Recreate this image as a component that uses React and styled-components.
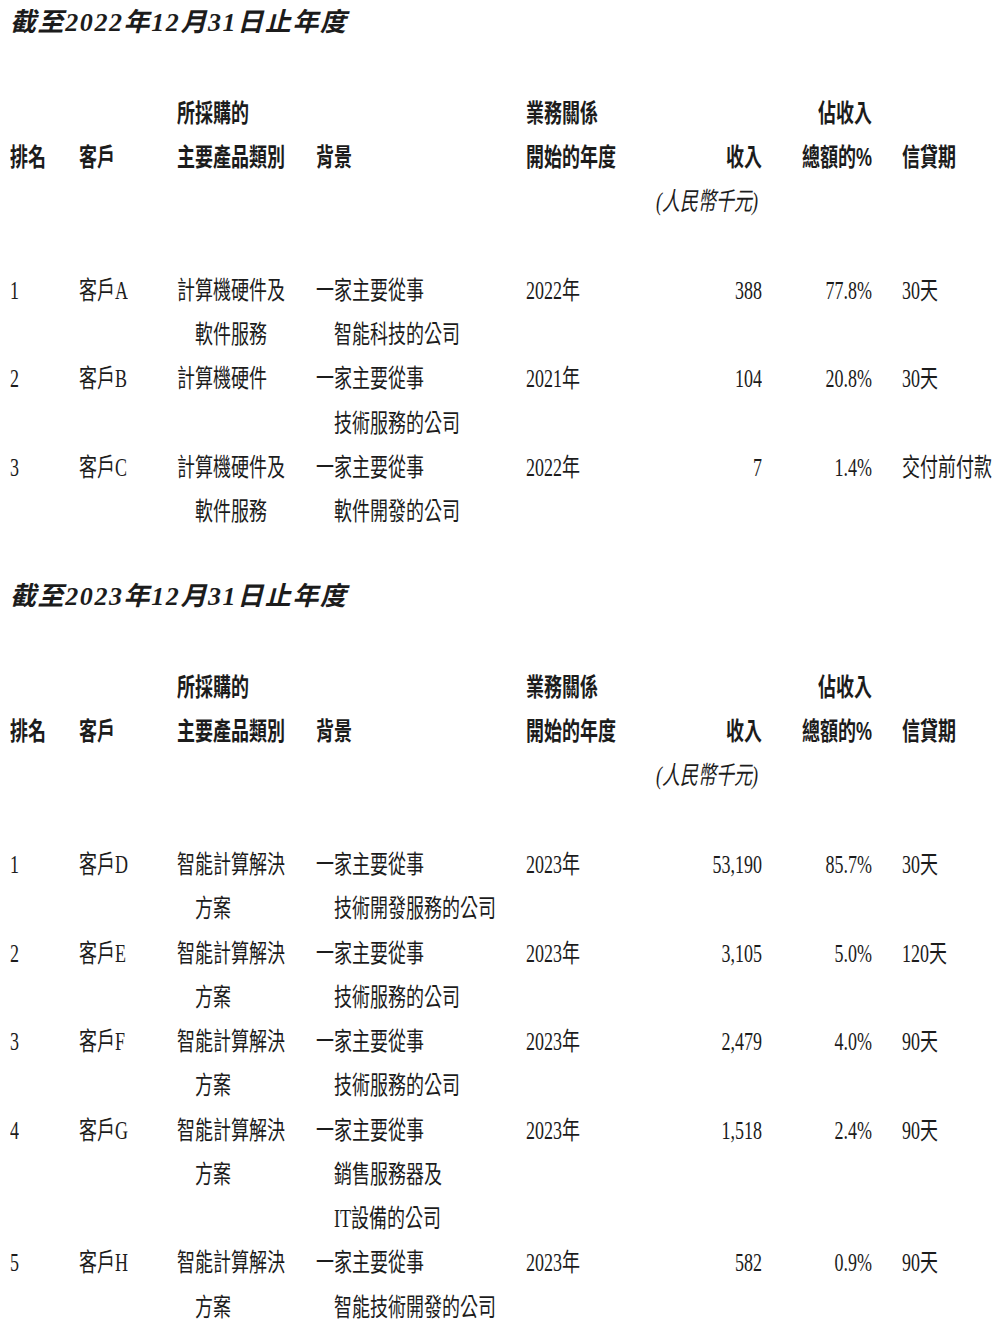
import React from "react";
import styled, { createGlobalStyle } from "styled-components";

const Global = createGlobalStyle`
  html, body { margin: 0; padding: 0; background: #ffffff; }
  body { font-family: "Liberation Serif", "Noto Sans CJK TC", serif; color: #1c1c1c; }
`;

const LINE = 44.25;
const COLS = "69px 98px 139px 210px 120px 116px 110px 1fr";

const Page = styled.div`
  width: 1000px;
  padding: 0 0 0 10px;
  box-sizing: border-box;
  overflow: hidden;
`;

const Section = styled.section`
  display: flex;
  flex-direction: column;
  & + & { margin-top: 40px; }
`;

const Title = styled.h2`
  margin: 0;
  height: 44px;
  line-height: 46px;
  font-family: "Liberation Serif", "Noto Sans CJK TC", serif;
  font-size: 26px;
  font-weight: 700;
  font-style: italic;
  letter-spacing: 1.6px;
  white-space: nowrap;
`;

const Row = styled.div`
  display: grid;
  grid-template-columns: ${COLS};
  align-items: start;
`;

const HeaderRow = styled(Row)`
  margin-top: 47.5px;
  margin-bottom: 44.5px;
  font-family: "Liberation Sans", "Noto Sans CJK TC", sans-serif;
  font-weight: 700;
`;

const Cell = styled.div`
  display: flex;
  flex-direction: column;
  align-items: ${(p) => (p.$right ? "flex-end" : "flex-start")};
  padding-left: ${(p) => (p.$pad ? p.$pad : 0)}px;
  min-width: 0;
`;

const Line = styled.div`
  height: ${LINE}px;
  line-height: ${LINE}px;
  font-size: 18px;
  white-space: nowrap;
  padding-left: ${(p) => (p.$indent ? 18 : 0)}px;
  transform: scaleY(1.4);
  transform-origin: 50% 52%;
  font-style: ${(p) => (p.$italic ? "italic" : "normal")};
  font-weight: ${(p) => (p.$italic ? 400 : "inherit")};
  font-family: ${(p) =>
    p.$italic ? `"Liberation Serif", "Noto Sans CJK TC", serif` : "inherit"};
  margin-right: ${(p) => (p.$italic ? 4 : 0)}px;
`;

const header = [
  { lines: ["", "排名"] },
  { lines: ["", "客戶"] },
  { lines: ["所採購的", "主要產品類別"] },
  { lines: ["", "背景"] },
  { lines: ["業務關係", "開始的年度"] },
  { lines: ["", "收入", "(人民幣千元)"], right: true, italicLast: true },
  { lines: ["佔收入", "總額的%"], right: true },
  { lines: ["", "信貸期"], pad: 30 },
];

const tables = [
  {
    title: "截至2022年12月31日止年度",
    rows: [
      ["1", "客戶A", ["計算機硬件及", "軟件服務"], ["一家主要從事", "智能科技的公司"], "2022年", "388", "77.8%", "30天"],
      ["2", "客戶B", ["計算機硬件"], ["一家主要從事", "技術服務的公司"], "2021年", "104", "20.8%", "30天"],
      ["3", "客戶C", ["計算機硬件及", "軟件服務"], ["一家主要從事", "軟件開發的公司"], "2022年", "7", "1.4%", "交付前付款"],
    ],
  },
  {
    title: "截至2023年12月31日止年度",
    rows: [
      ["1", "客戶D", ["智能計算解決", "方案"], ["一家主要從事", "技術開發服務的公司"], "2023年", "53,190", "85.7%", "30天"],
      ["2", "客戶E", ["智能計算解決", "方案"], ["一家主要從事", "技術服務的公司"], "2023年", "3,105", "5.0%", "120天"],
      ["3", "客戶F", ["智能計算解決", "方案"], ["一家主要從事", "技術服務的公司"], "2023年", "2,479", "4.0%", "90天"],
      ["4", "客戶G", ["智能計算解決", "方案"], ["一家主要從事", "銷售服務器及", "IT設備的公司"], "2023年", "1,518", "2.4%", "90天"],
      ["5", "客戶H", ["智能計算解決", "方案"], ["一家主要從事", "智能技術開發的公司"], "2023年", "582", "0.9%", "90天"],
    ],
  },
];

function Lines({ value }) {
  const arr = Array.isArray(value) ? value : [value];
  return arr.map((t, i) => (
    <Line key={i} $indent={i > 0}>
      {t}
    </Line>
  ));
}

function Table({ title, rows }) {
  return (
    <Section>
      <Title>{title}</Title>
      <HeaderRow>
        {header.map((h, i) => (
          <Cell key={i} $right={h.right} $pad={h.pad}>
            {h.lines.map((t, j) => (
              <Line key={j} $italic={h.italicLast && j === h.lines.length - 1}>
                {t}
              </Line>
            ))}
          </Cell>
        ))}
      </HeaderRow>
      {rows.map((r, i) => (
        <Row key={i}>
          {r.map((v, j) => (
            <Cell key={j} $right={j === 5 || j === 6} $pad={j === 7 ? 30 : 0}>
              <Lines value={v} />
            </Cell>
          ))}
        </Row>
      ))}
    </Section>
  );
}

export default function App() {
  return (
    <Page>
      <Global />
      {tables.map((t, i) => (
        <Table key={i} title={t.title} rows={t.rows} />
      ))}
    </Page>
  );
}
